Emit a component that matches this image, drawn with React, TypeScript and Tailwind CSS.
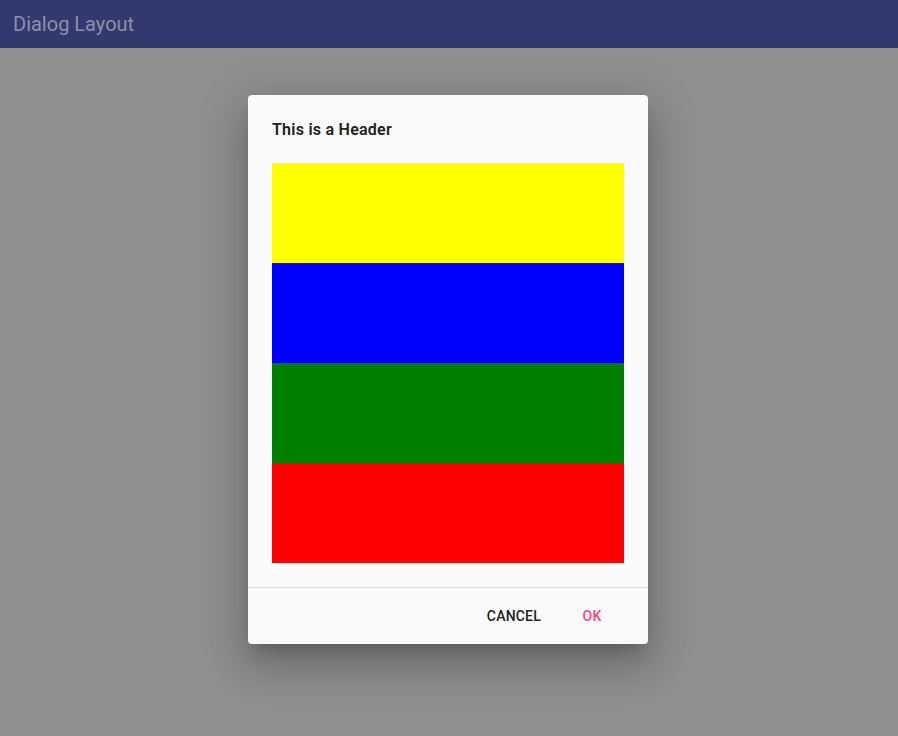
import React from "react";

export default function App() {
  return (
    <div className="w-[898px] h-[736px] bg-[#8f8f8f] flex flex-col" style={{ fontFamily: "Roboto, 'Liberation Sans', sans-serif" }}>
      <div className="h-12 shrink-0 bg-[#31396e] flex items-center px-[13px]">
        <span className="text-[20px] text-[#8d90a8] leading-none">Dialog Layout</span>
      </div>
      <div className="flex justify-center pt-[47px] pr-[2px]">
        <div className="w-[400px] bg-[#fafafa] rounded-[4px] shadow-[0_11px_15px_-7px_rgba(0,0,0,0.2),0_24px_38px_3px_rgba(0,0,0,0.14),0_9px_46px_8px_rgba(0,0,0,0.12)] flex flex-col">
          <div className="px-6 pt-[25px] pb-6 flex flex-col">
            <div className="text-[16px] leading-5 font-semibold text-[#212121] tracking-[0.25px]">This is a Header</div>
            <div className="mt-[23px] flex flex-col">
              <div className="h-[100px] bg-[#ffff00]" />
              <div className="h-[100px] bg-[#0000ff]" />
              <div className="h-[100px] bg-[#008000]" />
              <div className="h-[100px] bg-[#ff0000]" />
            </div>
          </div>
          <div className="h-px bg-[#dcdcdc]" />
          <div className="h-14 flex items-center justify-end pr-6 gap-[11px]">
            <div className="h-9 px-2 min-w-16 flex items-center justify-center text-[14px] font-medium text-[#212121] tracking-[0.2px]">CANCEL</div>
            <div className="h-9 px-2 min-w-16 flex items-center justify-center text-[14px] font-medium text-[#ff4081] tracking-[0.2px]">OK</div>
          </div>
        </div>
      </div>
    </div>
  );
}
